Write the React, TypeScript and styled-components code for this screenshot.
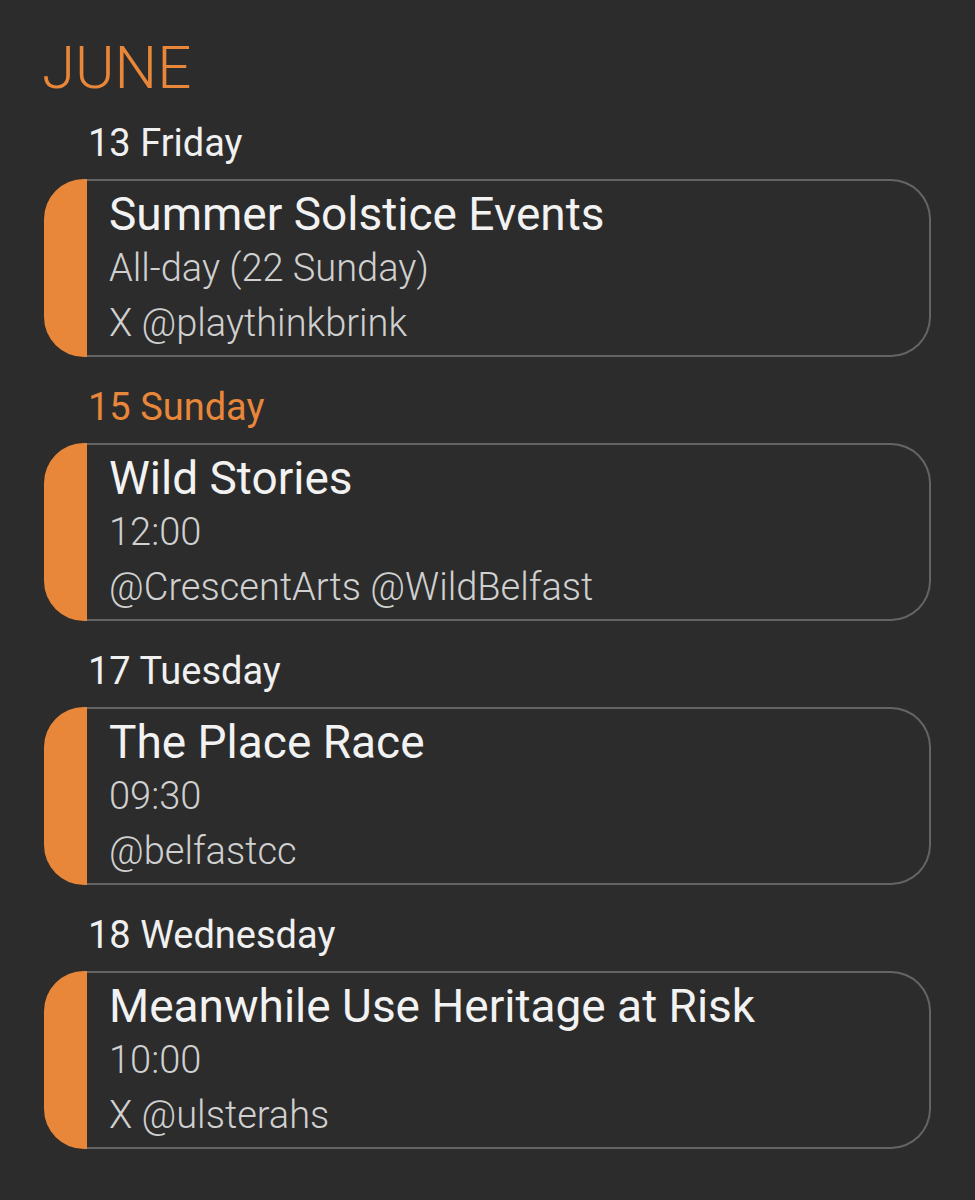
import React from "react";
import styled, { createGlobalStyle } from "styled-components";

const Global = createGlobalStyle`
  html, body { margin: 0; padding: 0; background: #2c2c2c; }
  body { font-family: Roboto, "Noto Sans", sans-serif; }
`;

const ORANGE = "#e8873a";

const Page = styled.div`
  width: 975px;
  height: 1200px;
  box-sizing: border-box;
  padding: 42px 44px 0 44px;
  background: #2c2c2c;
  overflow: hidden;
`;

const Month = styled.h1`
  margin: 0 0 0 -2px;
  font-family: Roboto, sans-serif;
  font-weight: 300;
  font-size: 60px;
  line-height: 51px;
  color: ${ORANGE};
`;

const DayHeading = styled.div<{ $today?: boolean }>`
  font-family: Roboto, sans-serif;
  font-weight: 400;
  font-size: 38px;
  line-height: 46px;
  padding: 27px 0 0 44px;
  margin-bottom: 13px;
  color: ${(p) => (p.$today ? ORANGE : "#f0f0f0")};
`;

const Card = styled.div`
  display: flex;
  width: 887px;
  height: 178px;
`;

const Bar = styled.div`
  width: 43px;
  flex: none;
  background: ${ORANGE};
  border-radius: 40px 0 0 40px;
`;

const Body = styled.div`
  flex: 1;
  box-sizing: border-box;
  border: 2px solid #646464;
  border-left: none;
  border-radius: 0 40px 40px 0;
  padding: 6px 0 0 22px;
  display: flex;
  flex-direction: column;
`;

const Title = styled.div`
  font-family: Roboto, sans-serif;
  font-size: 46px;
  line-height: 54px;
  color: #f2f2f2;
  white-space: nowrap;
`;

const Meta = styled.div`
  font-family: Roboto, sans-serif;
  font-weight: 300;
  font-size: 38px;
  line-height: 55px;
  color: #d0d0d0;
  white-space: nowrap;
`;

const Section = styled.section``;

type Ev = { day: string; today?: boolean; title: string; when: string; who: string };

const events: Ev[] = [
  { day: "13 Friday", title: "Summer Solstice Events", when: "All-day (22 Sunday)", who: "X @playthinkbrink" },
  { day: "15 Sunday", today: true, title: "Wild Stories", when: "12:00", who: "@CrescentArts @WildBelfast" },
  { day: "17 Tuesday", title: "The Place Race", when: "09:30", who: "@belfastcc" },
  { day: "18 Wednesday", title: "Meanwhile Use Heritage at Risk", when: "10:00", who: "X @ulsterahs" },
];

export default function App() {
  return (
    <Page>
      <Global />
      <Month>JUNE</Month>
      {events.map((e) => (
        <Section key={e.day}>
          <DayHeading $today={e.today}>{e.day}</DayHeading>
          <Card>
            <Bar />
            <Body>
              <Title>{e.title}</Title>
              <Meta>{e.when}</Meta>
              <Meta>{e.who}</Meta>
            </Body>
          </Card>
        </Section>
      ))}
    </Page>
  );
}
